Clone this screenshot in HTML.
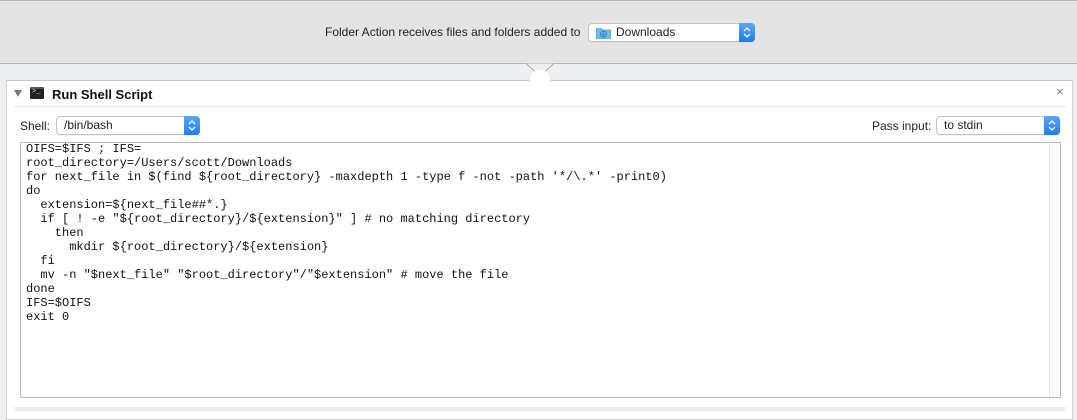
<!DOCTYPE html>
<html><head><meta charset="utf-8"><style>
*{box-sizing:border-box;margin:0;padding:0}
body{width:1077px;height:411px;overflow:hidden;background:#eceef1;font-family:"Liberation Sans",sans-serif;position:relative}
.top{position:absolute;left:0;top:0;width:1077px;height:64px;background:#e4e4e4;border-top:1px solid #b8b8b8;border-bottom:1px solid #b5b5b5}
.lbl{position:absolute;font-size:12px;color:#222}
.pop{position:absolute;height:19px;background:#fff;border:1px solid #c4c4c4;border-radius:4px;font-size:12px;color:#222;line-height:17px;padding-left:7px;box-shadow:0 1px 0 rgba(0,0,0,.05)}
.pop .arr{position:absolute;right:-1px;top:-1px;width:16px;height:19px;background:linear-gradient(#5aa7fb,#1d7cf2);border-radius:0 4px 4px 0}
.panel{position:absolute;left:6px;top:80px;width:1067px;height:340px;background:#fff;border:1px solid #cfcfcf;border-top:1px solid #c8c8c8}
.code{position:absolute;left:20px;top:142px;width:1041px;height:256px;border:1px solid #bdbdbd;background:#fff}
.code pre{position:absolute;left:5px;top:-1px;font-family:"Liberation Mono",monospace;font-size:12px;line-height:14px;color:#111}
.sb{position:absolute;right:0;top:0;width:11px;height:100%;background:#fafafa;border-left:1px solid #e6e6e6}
</style></head><body>
<div class="top"></div>
<div class="lbl" style="left:325px;top:25px">Folder Action receives files and folders added to</div>
<div class="pop" style="left:588px;top:23px;width:167px;padding-left:27px">
<svg style="position:absolute;left:7px;top:3px" width="15" height="12" viewBox="0 0 15 12"><path d="M0.5 1.5h5l1 1.5h8v8.5h-14z" fill="#6bbcf0" stroke="#4a9ed8" stroke-width="0.8"/><circle cx="7.5" cy="7" r="3" fill="none" stroke="#2d7fc0" stroke-width="0.9"/><path d="M7.5 5v3.5M6 7.2l1.5 1.4 1.5-1.4" fill="none" stroke="#2d7fc0" stroke-width="0.8"/></svg>
Downloads<div class="arr"><svg width="16" height="19"><path d="M5 8l3-3 3 3M5 11l3 3 3-3" fill="none" stroke="#fff" stroke-width="1.3"/></svg></div></div>
<div class="panel"></div>
<svg style="position:absolute;left:526px;top:62px" width="28" height="20"><path d="M0 1.5 L14 14 L28 1.5" fill="#eceef1" stroke="#b0b0b0" stroke-width="1"/><path d="M4 20 Q4 8 14 8 Q24 8 24 20z" fill="#fff"/></svg>
<div style="position:absolute;left:14px;top:90px;width:0;height:0;border-left:4px solid transparent;border-right:4px solid transparent;border-top:7px solid #777"></div>
<div style="position:absolute;left:30px;top:87px;width:14px;height:12px;background:#222;border-radius:1px;border-top:2px solid #555"><span style="position:absolute;left:2px;top:-1px;color:#ddd;font-size:7px;font-family:'Liberation Mono'">&gt;_</span></div>
<div style="position:absolute;left:52px;top:87px;font-size:13px;font-weight:bold;color:#111">Run Shell Script</div>
<div style="position:absolute;left:1056px;top:84px;font-size:13px;color:#777">×</div>
<div style="position:absolute;left:14px;top:106px;width:1052px;height:1px;background:#e6e6e6"></div>
<div class="lbl" style="left:20px;top:119px">Shell:</div>
<div class="pop" style="left:56px;top:116px;width:144px">/bin/bash<div class="arr"><svg width="16" height="19"><path d="M5 8l3-3 3 3M5 11l3 3 3-3" fill="none" stroke="#fff" stroke-width="1.3"/></svg></div></div>
<div class="lbl" style="left:872px;top:119px">Pass input:</div>
<div class="pop" style="left:936px;top:116px;width:124px">to stdin<div class="arr"><svg width="16" height="19"><path d="M5 8l3-3 3 3M5 11l3 3 3-3" fill="none" stroke="#fff" stroke-width="1.3"/></svg></div></div>
<div class="code"><pre>OIFS=$IFS ; IFS=
root_directory=/Users/scott/Downloads
for next_file in $(find ${root_directory} -maxdepth 1 -type f -not -path '*/\.*' -print0)
do
  extension=${next_file##*.}
  if [ ! -e "${root_directory}/${extension}" ] # no matching directory
    then
      mkdir ${root_directory}/${extension}
  fi
  mv -n "$next_file" "$root_directory"/"$extension" # move the file
done
IFS=$OIFS
exit 0</pre><div class="sb"></div></div>
<div style="position:absolute;left:14px;top:407px;width:1052px;height:4px;background:#ececec"></div>
</body></html>
